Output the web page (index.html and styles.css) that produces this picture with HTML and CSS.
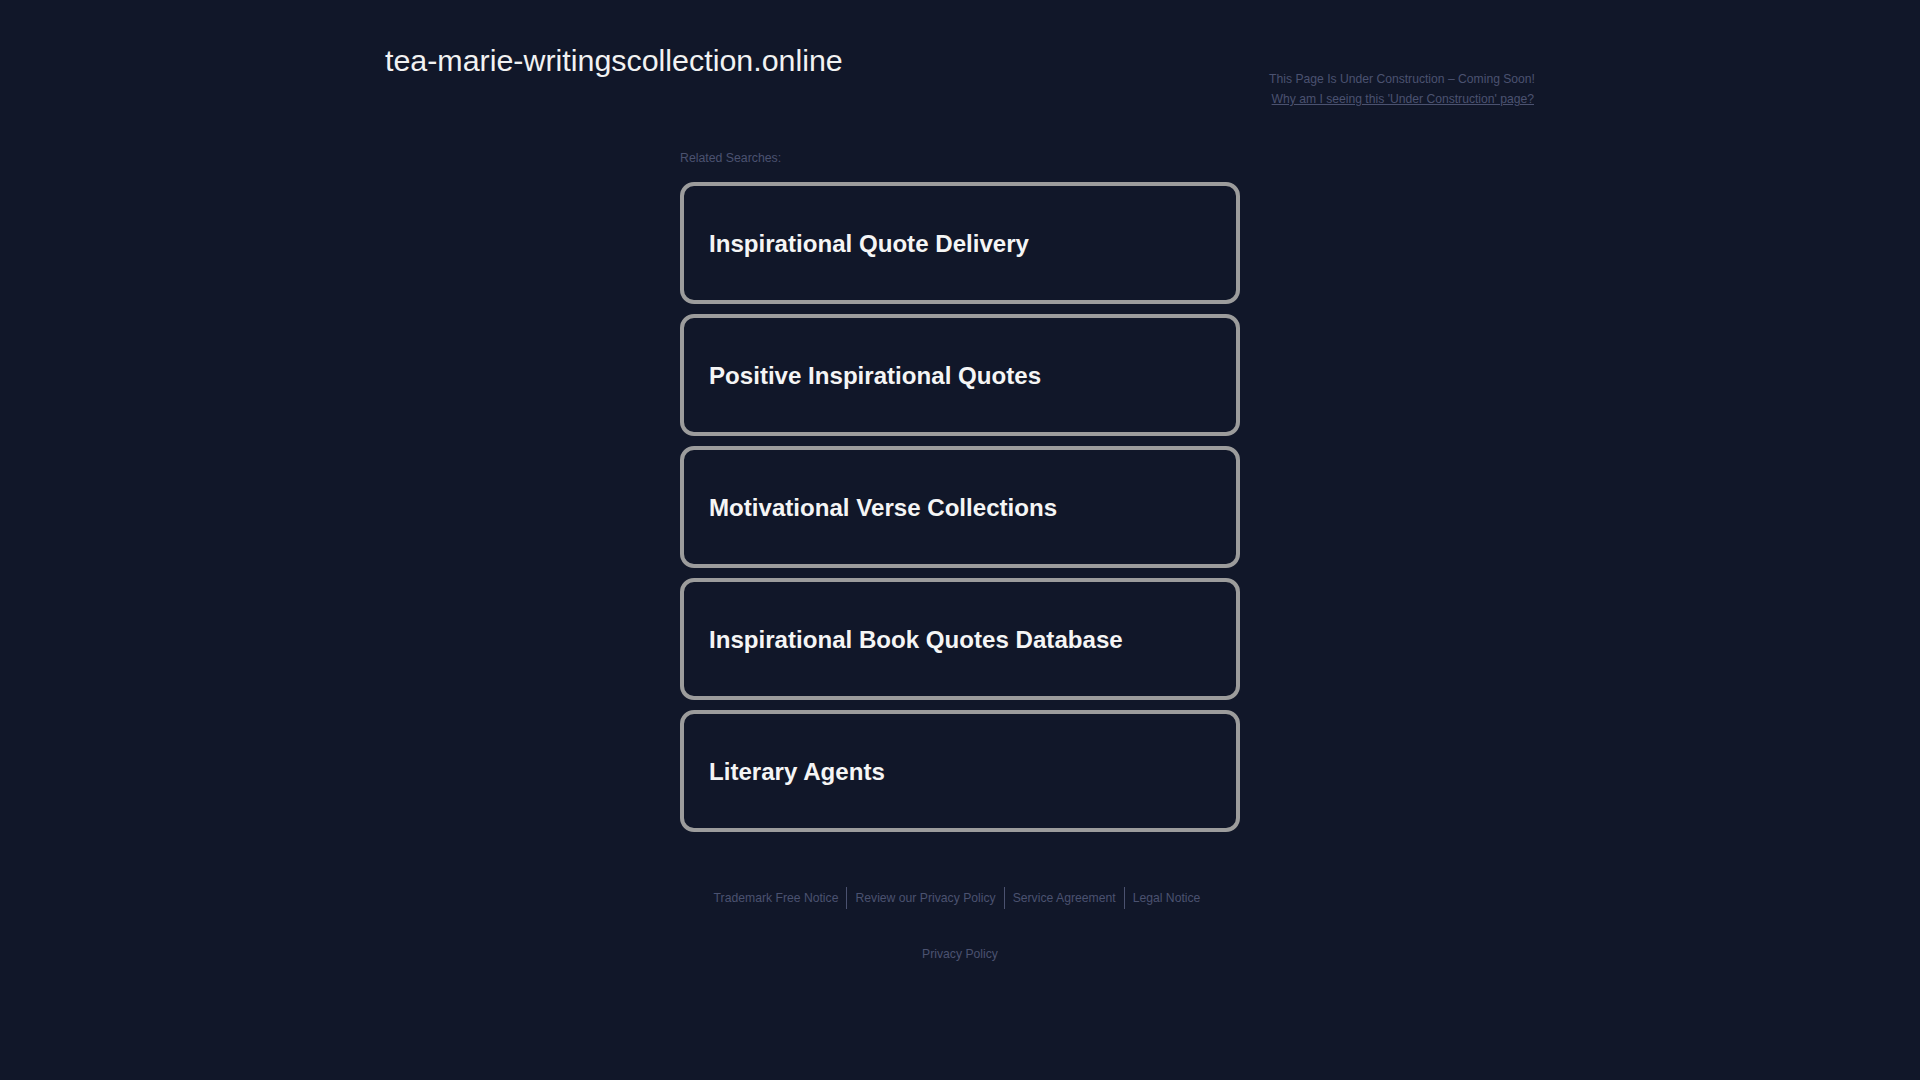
FILE: index.html
```html
<!DOCTYPE html>
<html lang="en">
<head>
<meta charset="utf-8">
<title>tea-marie-writingscollection.online</title>
<link rel="stylesheet" href="styles.css">
</head>
<body>
<header class="header">
  <h1 class="domain">tea-marie-writingscollection.online</h1>
  <div class="notice">
    <div class="notice-line">This Page Is Under Construction &ndash; Coming Soon!</div>
    <a class="notice-link" href="#">Why am I seeing this 'Under Construction' page?</a>
  </div>
</header>
<main class="main">
  <div class="related">Related Searches:</div>
  <ul class="cards">
    <li class="card"><a href="#">Inspirational Quote Delivery</a></li>
    <li class="card"><a href="#">Positive Inspirational Quotes</a></li>
    <li class="card"><a href="#">Motivational Verse Collections</a></li>
    <li class="card"><a href="#">Inspirational Book Quotes Database</a></li>
    <li class="card"><a href="#">Literary Agents</a></li>
  </ul>
</main>
<footer class="footer">
  <nav class="footer-links">
    <a href="#">Trademark Free Notice</a>
    <a href="#">Review our Privacy Policy</a>
    <a href="#">Service Agreement</a>
    <a href="#">Legal Notice</a>
  </nav>
  <div class="footer-privacy"><a href="#">Privacy Policy</a></div>
</footer>
</body>
</html>
```
FILE: styles.css
```css
html, body {
  margin: 0;
  padding: 0;
}
body {
  background: #111729;
  font-family: "Liberation Sans", Arial, sans-serif;
  color: #4b5270;
  min-height: 1080px;
}
a {
  color: inherit;
  text-decoration: none;
}
.header {
  width: 1150px;
  margin: 0 auto;
  padding-top: 42px;
  display: flex;
  justify-content: space-between;
  align-items: flex-start;
}
.domain {
  margin: 0;
  font-size: 30.4px;
  line-height: 36px;
  font-weight: normal;
  color: #f2f2f2;
}
.notice {
  margin-top: 27px;
  text-align: right;
  font-size: 12.15px;
  line-height: 20px;
  color: #4b5270;
}
.notice-link {
  text-decoration: underline;
  display: inline-block;
  padding-right: 1px;
}
.main {
  width: 560px;
  margin: 0 auto;
  padding-top: 41px;
}
.related {
  font-size: 12.3px;
  line-height: 16px;
  margin-bottom: 16px;
}
.cards {
  list-style: none;
  margin: 0;
  padding: 0;
  display: flex;
  flex-direction: column;
  gap: 10px;
}
.card {
  height: 122px;
  box-sizing: border-box;
  border: 4px solid #9c9c9c;
  border-radius: 14px;
  display: flex;
  align-items: center;
  padding-left: 25px;
  padding-top: 2px;
}
.card a {
  font-size: 24.1px;
  font-weight: bold;
  color: #f5f5f5;
}
.footer {
  padding-top: 55px;
  text-align: center;
  font-size: 12.2px;
}
.footer-links {
  display: flex;
  justify-content: center;
  padding-right: 6px;
}
.footer-links a {
  line-height: 22px;
  padding: 0 8px;
  border-left: 1px solid #4b5270;
}
.footer-links a:first-child {
  border-left: none;
}
.footer-privacy {
  margin-top: 34px;
  line-height: 22px;
}
```
